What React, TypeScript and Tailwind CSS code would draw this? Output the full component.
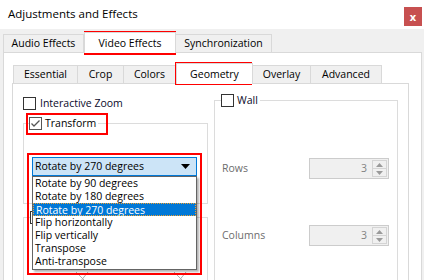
import React from "react";

const font = { fontFamily: '"Open Sans", "Noto Sans", sans-serif' };

function Tab({ label, w, selected }: { label: string; w: number; selected?: boolean }) {
  return (
    <div
      style={{ width: w }}
      className={
        selected
          ? "relative z-10 -mb-px flex h-[21px] items-center justify-center border border-b-0 border-[#d9d9d9] bg-white"
          : "-ml-px flex h-[18px] items-center justify-center border border-b-0 border-[#d9d9d9] bg-[#f0f0f0] first:ml-0"
      }
    >
      <span className="leading-none">{label}</span>
    </div>
  );
}

function Checkbox({ checked, gray }: { checked?: boolean; gray?: boolean }) {
  return (
    <div
      className={
        "flex h-[13px] w-[13px] shrink-0 items-center justify-center border bg-white " +
        (gray ? "border-[#555555]" : "border-[#333333]")
      }
    >
      {checked && (
        <svg width="11" height="11" viewBox="0 0 11 11">
          <path d="M1.5 5.5 L4 8 L9.5 2.5" fill="none" stroke="#555555" strokeWidth="1.3" />
        </svg>
      )}
    </div>
  );
}

function Spin() {
  return (
    <div className="flex h-[21px] w-[80px] items-center border border-[#cccccc] bg-[#f0f0f0]">
      <div className="flex-1 pr-[5px] text-right leading-none text-[#838383]">3</div>
      <div className="mr-[1px] flex h-[17px] w-[15px] flex-col border border-[#d4d4d4] bg-[#f0f0f0]">
        <div className="flex flex-1 items-center justify-center border-b border-[#d4d4d4]">
          <svg width="7" height="4" viewBox="0 0 7 4">
            <path d="M0 4 L3.5 0 L7 4 Z" fill="#9a9a9a" />
          </svg>
        </div>
        <div className="flex flex-1 items-center justify-center">
          <svg width="7" height="4" viewBox="0 0 7 4">
            <path d="M0 0 L3.5 4 L7 0 Z" fill="#9a9a9a" />
          </svg>
        </div>
      </div>
    </div>
  );
}

const items = [
  "Rotate by 90 degrees",
  "Rotate by 180 degrees",
  "Rotate by 270 degrees",
  "Flip horizontally",
  "Flip vertically",
  "Transpose",
  "Anti-transpose",
];

export default function App() {
  return (
    <div
      style={font}
      className="relative h-[280px] w-[424px] overflow-hidden bg-[#f0f0f0] text-[10.5px] text-black"
    >
      {/* Title bar */}
      <div className="flex h-[29px] items-start bg-white">
        <div className="pl-[8px] pt-[8px] text-[11.5px] leading-none">Adjustments and Effects</div>
        <div className="ml-auto mr-[2px] mt-[7px] flex h-[19px] w-[18px] items-center justify-center bg-[#c75050] text-[11px] font-bold leading-none text-white">
          x
        </div>
      </div>

      {/* Outer tab widget */}
      <div className="pl-[3px] pr-[2px] pt-[2px]">
        <div className="flex h-[21px] items-end">
          <Tab label="Audio Effects" w={81} />
          <Tab label="Video Effects" w={92} selected />
          <Tab label="Synchronization" w={97} />
        </div>
        <div className="h-[240px] border border-[#d9d9d9] bg-white pl-[8px] pr-[12px] pt-[9px]">
          {/* Inner tab widget */}
          <div className="flex h-[21px] items-end pl-[1px]">
            <Tab label="Essential" w={65} />
            <Tab label="Crop" w={47} />
            <Tab label="Colors" w={53} />
            <Tab label="Geometry" w={77} selected />
            <Tab label="Overlay" w={59} />
            <Tab label="Advanced" w={72} />
          </div>
          <div className="h-[210px] border border-[#d9d9d9] bg-white">
            <div className="flex pl-[10px] pt-[10px]">
              {/* Left column */}
              <div className="flex w-[185px] flex-col">
                <div className="mt-[3px] flex items-center gap-[4px]">
                  <Checkbox />
                  <span className="leading-none text-[#0a0a2a]">Interactive Zoom</span>
                </div>
                <div className="relative mt-[13px] h-[81px] border border-[#dcdcdc]">
                  <div className="absolute -top-[7px] left-[5px] flex items-center gap-[3px] bg-white pr-[2px]">
                    <Checkbox checked gray />
                    <span className="leading-none">Transform</span>
                  </div>
                  <div className="ml-[8px] mt-[33px] flex h-[19px] w-[165px] items-center border border-[#0078d7] bg-[#cce4f7] pl-[2px]">
                    <span className="flex-1 leading-none">Rotate by 270 degrees</span>
                    <svg width="9" height="5" viewBox="0 0 9 5" className="mr-[6px]">
                      <path d="M0 0 L9 0 L4.5 5 Z" fill="#000" />
                    </svg>
                  </div>
                </div>
                <div className="relative mt-[13px] h-[80px] border border-[#dcdcdc]">
                  <div className="absolute -top-[7px] left-[6px] h-[13px] w-[13px] border border-[#333333] bg-white" />
                  <svg className="absolute left-[50px] top-[52px]" width="120" height="14" viewBox="0 0 120 14">
                    <path d="M2 2 L12 12 M14 2 L6 12 M100 2 L110 12 M112 2 L104 12" stroke="#b0b0b0" strokeWidth="1" fill="none" />
                  </svg>
                </div>
              </div>
              {/* Right column */}
              <div className="ml-[6px] flex w-[184px] flex-col">
                <div className="relative mt-[6px] h-[190px] border border-[#dcdcdc]">
                  <div className="absolute -top-[7px] left-[6px] flex items-center gap-[3px] bg-white pr-[2px]">
                    <Checkbox />
                    <span className="leading-none text-[#0a0a2a]">Wall</span>
                  </div>
                  <div className="mt-[57px] flex items-center pl-[7px]">
                    <span className="w-[87px] leading-none text-[#6d6d6d]">Rows</span>
                    <Spin />
                  </div>
                  <div className="mt-[46px] flex items-center pl-[7px]">
                    <span className="w-[87px] leading-none text-[#6d6d6d]">Columns</span>
                    <Spin />
                  </div>
                </div>
              </div>
            </div>
          </div>
        </div>
      </div>

      {/* Dropdown list */}
      <div className="absolute left-[32px] top-[176px] w-[165px] border border-[#646464] bg-white pb-[1px] shadow-[2px_2px_2px_rgba(0,0,0,0.3)]">
        {items.map((it, i) => (
          <div
            key={it}
            className={
              "h-[13px] pl-[2px] leading-[13px] " +
              (i === 2 ? "border border-dotted border-[#f0a030] bg-[#0078d7] pl-[1px] leading-[11px] text-white" : "")
            }
          >
            {it}
          </div>
        ))}
      </div>

      {/* Red annotation boxes */}
      <div className="pointer-events-none absolute left-[84px] top-[31px] h-[24px] w-[92px] border-2 border-[#ff0000]" />
      <div className="pointer-events-none absolute left-[175px] top-[62px] h-[23px] w-[77px] border-2 border-[#ff0000]" />
      <div className="pointer-events-none absolute left-[26px] top-[113px] h-[22px] w-[82px] border-2 border-[#ff0000]" />
      <div className="pointer-events-none absolute left-[27px] top-[153px] h-[122px] w-[175px] border-2 border-[#ff0000]" />
    </div>
  );
}
